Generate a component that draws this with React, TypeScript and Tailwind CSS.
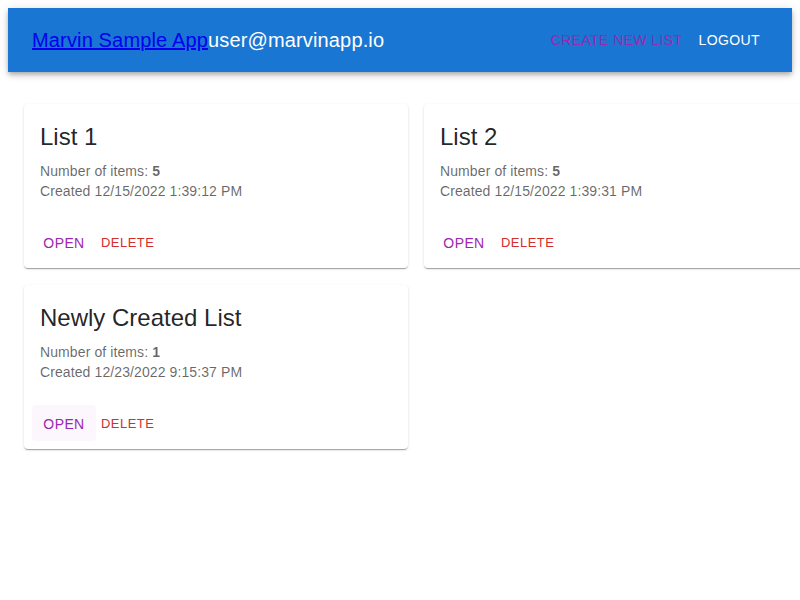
import React from 'react';

interface ListSummary {
  id: number;
  name: string;
  itemCount: number;
  created: string;
  hovered?: boolean;
}

const lists: ListSummary[] = [
  { id: 1, name: 'List 1', itemCount: 5, created: '12/15/2022 1:39:12 PM' },
  { id: 2, name: 'List 2', itemCount: 5, created: '12/15/2022 1:39:31 PM' },
  { id: 3, name: 'Newly Created List', itemCount: 1, created: '12/23/2022 9:15:37 PM', hovered: true },
];

function ListCard({ list }: { list: ListSummary }) {
  return (
    <div className="w-[384px] bg-white rounded shadow-[0px_2px_1px_-1px_rgba(0,0,0,0.2),0px_1px_1px_0px_rgba(0,0,0,0.14),0px_1px_3px_0px_rgba(0,0,0,0.12)]">
      {/* Card content */}
      <div className="px-4 pt-[17px] pb-[15px]">
        <h5 className="text-2xl leading-8 mb-2 text-[rgba(0,0,0,0.87)]">{list.name}</h5>
        <p className="text-sm leading-5 tracking-[0.1px] text-[rgba(0,0,0,0.6)]">
          Number of items: <b>{list.itemCount}</b>
        </p>
        <p className="text-sm leading-5 tracking-[0.1px] text-[rgba(0,0,0,0.6)]">Created {list.created}</p>
      </div>

      {/* Actions */}
      <div className="flex items-center p-2">
        <button
          className={`h-9 min-w-16 px-2 pt-[2px] rounded text-sm leading-6 tracking-[0.4px] uppercase text-[#9c27b0] ${
            list.hovered ? 'bg-[rgba(156,39,176,0.04)]' : ''
          }`}
        >
          Open
        </button>
        <button className="h-[30px] min-w-16 px-[5px] pt-[2px] rounded text-[13px] leading-[22px] tracking-[0.46px] uppercase text-[#d32f2f] text-left">
          Delete
        </button>
      </div>
    </div>
  );
}

export default function App() {
  return (
    <div className="w-[800px] h-[600px] overflow-hidden bg-white p-2 font-['Liberation_Sans',Arial,sans-serif]">
      {/* App bar */}
      <header className="bg-[#1976d2] shadow-[0px_2px_4px_-1px_rgba(0,0,0,0.2),0px_4px_5px_0px_rgba(0,0,0,0.14),0px_1px_10px_0px_rgba(0,0,0,0.12)]">
        <div className="flex items-center h-16 px-6">
          <div className="flex-1 text-xl leading-8 tracking-[0.15px] text-white">
            <a href="#" className="text-[#0000ee] underline">Marvin Sample App</a>
            <span>user@marvinapp.io</span>
          </div>
          <button className="h-9 px-2 text-sm leading-6 tracking-[0.4px] uppercase text-[#9c27b0]">
            Create new list
          </button>
          <button className="h-9 min-w-16 px-2 text-sm leading-6 tracking-[0.4px] uppercase text-white">
            Logout
          </button>
        </div>
      </header>

      {/* List grid */}
      <main className="pt-8 px-4">
        <div className="grid grid-cols-[384px_384px] gap-x-4 gap-y-[17px]">
          {lists.map((list) => (
            <ListCard key={list.id} list={list} />
          ))}
        </div>
      </main>
    </div>
  );
}
